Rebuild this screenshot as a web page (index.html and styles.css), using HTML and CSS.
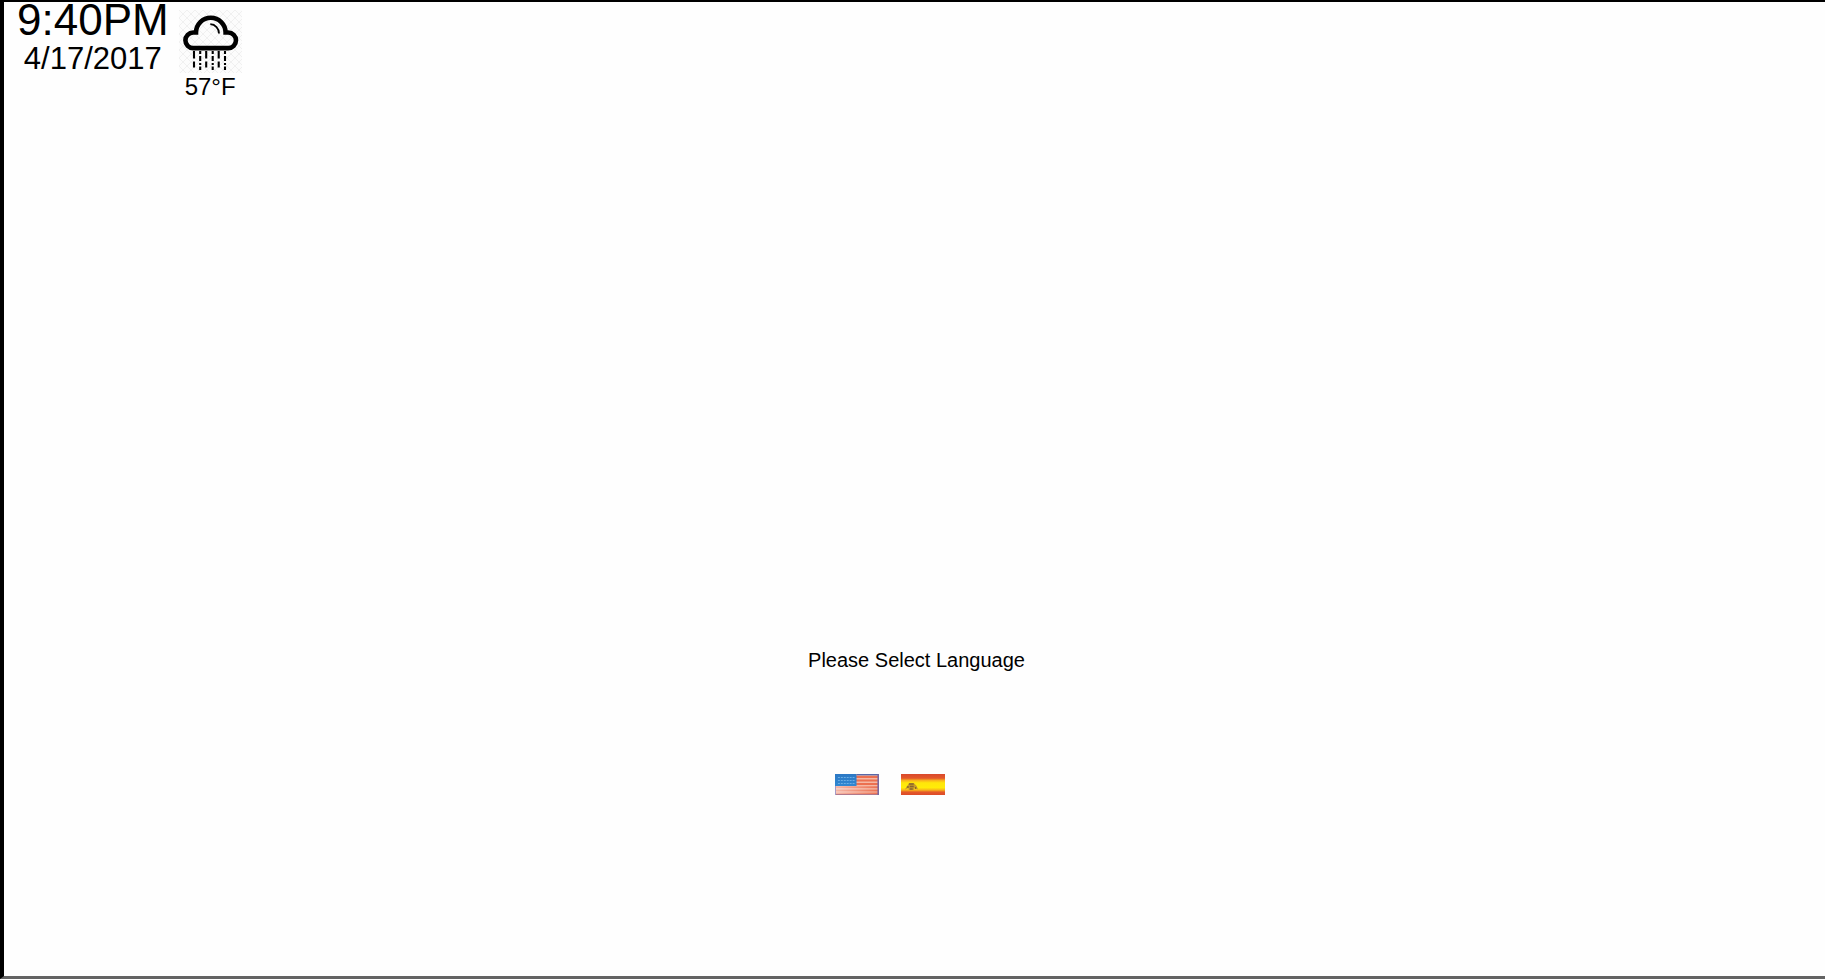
FILE: index.html
```html
<!DOCTYPE html>
<html lang="en">
<head>
<meta charset="utf-8">
<title>Please Select Language</title>
<link rel="stylesheet" href="styles.css">
</head>
<body>
<div class="screen">
  <header class="status">
    <div class="clock">
      <time class="time">9:40PM</time>
      <time class="date" datetime="2017-04-17">4/17/2017</time>
    </div>
    <div class="weather">
      <svg class="weather-icon" viewBox="0 0 63 63" role="img" aria-label="Rain">
        <defs>
          <pattern id="hatch" width="8" height="8" patternUnits="userSpaceOnUse">
            <path d="M0 0L8 8M8 0L0 8" stroke="#f0f0f0" stroke-width="1"/>
          </pattern>
        </defs>
        <rect width="63" height="63" fill="#fcfcfc"/>
        <rect width="63" height="63" fill="url(#hatch)"/>
        <path d="M14.2 38.1H49.2A7.8 7.8 0 0 0 49.2 22.5H46.6A14.8 14.8 0 0 0 17 22.5H14.2A7.8 7.8 0 0 0 14.2 38.1Z" fill="none" stroke="#000" stroke-width="4.6"/>
        <path d="M31.3 14.2A9 9 0 0 1 40 23.4" fill="none" stroke="#000" stroke-width="1.8"/>
        <g stroke="#000" stroke-width="2.1">
          <path d="M15 41V48.5M15 51.5V57.5M27.2 41V48.5M27.2 51.5V57.5M39.7 41V48.5M39.7 51.5V57.5"/>
          <path d="M21.2 41V44M21.2 46V51M21.2 53V55M21.2 56.5V60M33.7 41V44M33.7 46V51M33.7 53V55M33.7 56.5V60M46 41V44M46 46V51M46 53V55M46 56.5V60"/>
        </g>
      </svg>
      <span class="temp">57°F</span>
    </div>
  </header>
  <main class="chooser">
    <h1 class="prompt">Please Select Language</h1>
    <div class="flags">
      <button class="flag" type="button" aria-label="English">
        <svg viewBox="0 0 45 21" preserveAspectRatio="none">
          <defs>
            <linearGradient id="canton" x2="0" y2="1">
              <stop offset="0" stop-color="#2c78c4"/>
              <stop offset="1" stop-color="#3088d2"/>
            </linearGradient>
            <linearGradient id="shine" x2="1" y2="0">
              <stop offset="0" stop-color="#fff" stop-opacity=".5"/>
              <stop offset="1" stop-color="#fff" stop-opacity="0"/>
            </linearGradient>
          </defs>
          <rect width="45" height="21" fill="#f5b8a4"/>
          <path d="M0 3H45M0 6.5H45M0 10H45M0 13.2H45M0 16.4H45M0 19.4H45" stroke="#ec7050" stroke-width="2"/>
          <rect y="12" width="45" height="8" fill="url(#shine)"/>
          <rect width="22" height="12" fill="url(#canton)"/>
          <path d="M3 3.5H20M3 6.5H20M3 9.5H20" stroke="#6caee4" stroke-width="1" stroke-dasharray="2 1"/>
          <path d="M22 .7H45" stroke="#5868a8" stroke-width="1.4"/>
          <path d="M0 20.5H45" stroke="#b0788c"/>
          <path d="M44.2 0V21" stroke="#7868a0" stroke-width="1.6"/>
          <path d="M.5 12V21" stroke="#a39bc8"/>
        </svg>
      </button>
      <button class="flag" type="button" aria-label="Español">
        <svg viewBox="0 0 45 21" preserveAspectRatio="none">
          <defs>
            <linearGradient id="spain" x2="0" y2="1">
              <stop offset="0" stop-color="#d9492c"/>
              <stop offset=".2" stop-color="#e4582a"/>
              <stop offset=".31" stop-color="#f9b51c"/>
              <stop offset=".42" stop-color="#ffe60a"/>
              <stop offset=".65" stop-color="#ffec08"/>
              <stop offset=".76" stop-color="#f8b61a"/>
              <stop offset=".86" stop-color="#e4582a"/>
              <stop offset="1" stop-color="#dc4a28"/>
            </linearGradient>
          </defs>
          <rect width="45" height="21" fill="url(#spain)"/>
          <path d="M4 15.5L7 11L9 9H13L16 12L17.5 15.5L14 14L13 16H8L7.5 14Z" fill="#c99a28"/>
          <path d="M8 10H13M6 13H8M9 12.5H13M15 13V15M9 15H12" stroke="#87662e" stroke-width="1.3"/>
        </svg>
      </button>
    </div>
  </main>
</div>
</body>
</html>
```
FILE: styles.css
```css
* {
  box-sizing: border-box;
}

body {
  margin: 0;
  background: #fefefe;
  color: #000;
  font-family: "Liberation Sans", Arial, sans-serif;
}

.screen {
  display: flex;
  flex-direction: column;
  min-height: 100vh;
  border: 0 solid #000;
  border-top-width: 2px;
  border-left-width: 4px;
  border-bottom: 3px solid #636363;
}

.status {
  display: flex;
  gap: 10px;
  padding-left: 13px;
}

.clock,
.weather {
  display: flex;
  flex-direction: column;
  align-items: center;
}

.time {
  font-size: 44px;
  line-height: 36px;
}

.date {
  font-size: 31px;
  line-height: 42px;
}

.weather {
  padding-top: 8px;
}

.weather-icon {
  display: block;
  width: 63px;
  height: 63px;
}

.temp {
  font-size: 24px;
  line-height: 28px;
}

.chooser {
  flex: 1;
  display: flex;
  flex-direction: column;
  align-items: center;
  justify-content: flex-end;
  gap: 100px;
  padding: 0 0 181px 4px;
}

.prompt {
  margin: 0;
  font-size: 20px;
  font-weight: 400;
  line-height: 28px;
}

.flags {
  display: flex;
  gap: 22px;
  margin-right: 53px;
}

.flag {
  width: 44px;
  height: 21px;
  padding: 0;
  border: 0;
  background: none;
  cursor: pointer;
}

.flag svg {
  display: block;
  width: 100%;
  height: 100%;
}
```
